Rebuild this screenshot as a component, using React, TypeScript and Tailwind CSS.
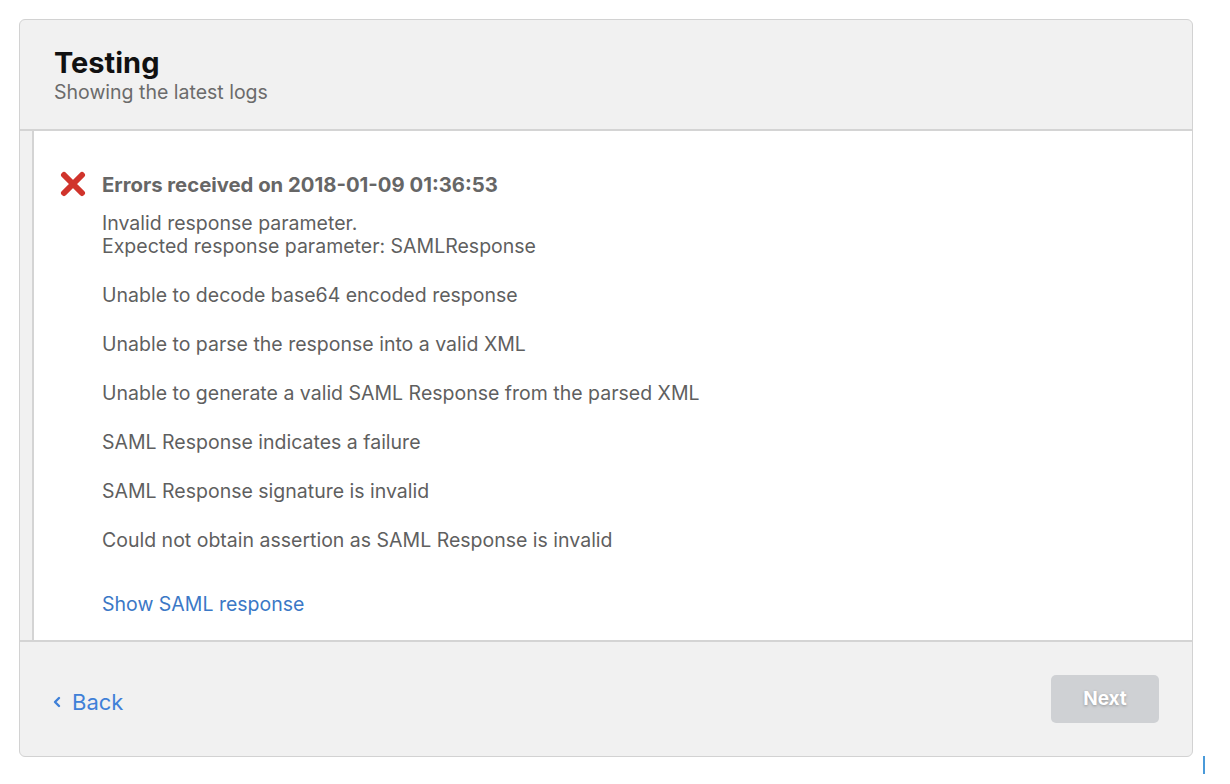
const errors: string[][] = [
  ["Invalid response parameter.", "Expected response parameter: SAMLResponse"],
  ["Unable to decode base64 encoded response"],
  ["Unable to parse the response into a valid XML"],
  ["Unable to generate a valid SAML Response from the parsed XML"],
  ["SAML Response indicates a failure"],
  ["SAML Response signature is invalid"],
  ["Could not obtain assertion as SAML Response is invalid"],
];

function CrossIcon() {
  return (
    <svg width="26" height="26" viewBox="0 0 26 26" className="shrink-0">
      <path d="M4 4 L22 22 M22 4 L4 22" stroke="#d0342c" strokeWidth="6" strokeLinecap="round" />
    </svg>
  );
}

export default function App() {
  return (
    <div className="min-h-screen bg-white pt-[19px] pl-[19px] font-['Inter',sans-serif]">
      <div className="flex items-end">
        <div className="w-[1174px] rounded-[6px] border border-[#d2d2d2] bg-[#f1f1f1] overflow-hidden">
          <div className="h-[111px] border-b-2 border-[#d4d4d4] px-[34px] pt-[26px]">
            <h1 className="text-[29px] font-bold leading-[34px] text-[#111]">Testing</h1>
            <p className="text-[19.5px] leading-[24px] text-[#6b6b6b]">Showing the latest logs</p>
          </div>
          <div className="flex">
            <div className="w-[14px] shrink-0 border-r-2 border-[#d4d4d4] bg-[#f1f1f1]" />
            <div className="flex-1 bg-white pl-[26px] pt-[40px] pb-[24px]">
              <div className="flex items-center gap-[16px]">
                <CrossIcon />
                <h2 className="text-[20.3px] font-bold leading-[23px] text-[#666]">
                  Errors received on 2018-01-09 01:36:53
                </h2>
              </div>
              <div className="pl-[42px] pt-[15px] text-[19.5px] leading-[23px] text-[#5f5f5f]">
                <div className="flex flex-col gap-[26px]">
                  {errors.map((lines, i) => (
                    <p key={i}>
                      {lines.map((l, j) => (
                        <span key={j} className="block">
                          {l}
                        </span>
                      ))}
                    </p>
                  ))}
                </div>
                <a className="mt-[41px] block text-[#3b78c6]">Show SAML response</a>
              </div>
            </div>
          </div>
          <div className="flex h-[116px] items-start justify-between border-t-2 border-[#d4d4d4] px-[33px] pt-[33px]">
            <a className="mt-[14px] flex items-center gap-[11px] text-[22px] leading-[26px] text-[#3f80d8]">
              <svg width="8" height="12" viewBox="0 0 8 12">
                <path d="M6 2 L2 6 L6 10" stroke="#3f80d8" strokeWidth="2.4" fill="none" strokeLinecap="round" strokeLinejoin="round" />
              </svg>
              Back
            </a>
            <button className="h-[48px] w-[108px] rounded-[5px] bg-[#cfd1d4] text-[19px] font-bold text-white [text-shadow:0_1px_3px_rgba(0,0,0,0.3)]">
              Next
            </button>
          </div>
        </div>
        <div className="mb-[-17px] ml-[10px] h-[18px] w-[2px] bg-[#4a9ad9]" />
      </div>
    </div>
  );
}
